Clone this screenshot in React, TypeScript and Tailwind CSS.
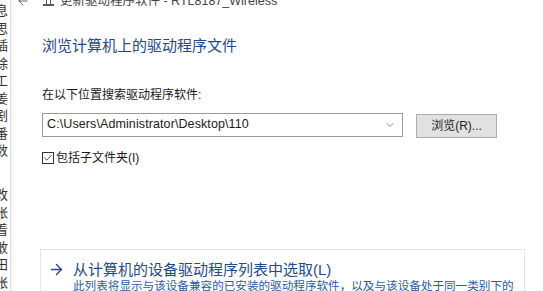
import { ChevronDown, ArrowLeft, ArrowRight, Check } from "lucide-react";

const stripChars = ["息", "思", "插", "除", "工", "姜", "剧", "番", "数", "", "", "改", "张", "着", "敢", "田", "张"];

const App = () => {
  return (
    <div
      className="flex h-[291px] w-[543px] overflow-hidden bg-white text-[#1a1a1a]"
      style={{ fontFamily: '"Liberation Sans", "Noto Sans CJK SC", sans-serif' }}
    >
      {/* background window peeking out on the left */}
      <div className="flex w-[11px] shrink-0 flex-col overflow-hidden border-r border-[#dcdcdc] pt-[2px] shadow-[2px_0_4px_rgba(0,0,0,0.06)]">
        {stripChars.map((c, i) => (
          <div key={i} className="-ml-[5px] h-[17.5px] text-[13px] leading-[17.5px] text-[#333]">
            {c}
          </div>
        ))}
      </div>

      <div className="flex flex-1 flex-col">
        {/* title bar, cut off at the top */}
        <div className="-mt-[8px] flex h-[20px] items-center text-[12.5px] text-[#444]">
          <ArrowLeft className="ml-[5px] h-[14px] w-[14px] text-[#555]" strokeWidth={1.5} />
          <div className="ml-[13px] flex h-[10px] w-[11px] items-end justify-center border-b-2 border-[#5a5a5a]">
            <div className="h-[7px] w-[5px] border border-b-0 border-[#5a5a5a]" />
          </div>
          <span className="ml-[6px]">更新驱动程序软件 - RTL8187_Wireless</span>
        </div>

        <div className="pl-[31px]">
          <div className="mt-[25px] text-[15px] leading-[20px] text-[#234a8c]">浏览计算机上的驱动程序文件</div>

          <div className="mt-[31px] text-[12px] leading-[16px]">在以下位置搜索驱动程序软件:</div>

          <div className="mt-[9px] flex items-center">
            <div className="flex h-[24px] w-[361px] items-center justify-between border border-[#9a9a9a] bg-white pl-[4px] pr-[6px]">
              <span className="text-[12.5px] tracking-[0.1px]">C:\Users\Administrator\Desktop\110</span>
              <ChevronDown className="h-[12px] w-[12px] text-[#666]" strokeWidth={1.5} />
            </div>
            <button className="ml-[13px] mt-[2px] h-[24px] w-[81px] border border-[#adadad] bg-[#e1e1e1] text-[12px] text-[#222]">
              浏览(R)...
            </button>
          </div>

          <label className="mt-[12px] flex items-center text-[12px] leading-[16px]">
            <span className="flex h-[12px] w-[12px] items-center justify-center border border-[#333] bg-white">
              <Check className="h-[10px] w-[10px] text-[#222]" strokeWidth={2} />
            </span>
            <span className="ml-[2px]">包括子文件夹(I)</span>
          </label>
        </div>

        <div className="ml-[29px] mr-[18px] mt-[83px] flex-1 border border-[#e6e6e6] pl-[7px] pt-[10px]">
          <div className="flex items-center text-[15px] leading-[19px] text-[#234a8c]">
            <ArrowRight className="h-[17px] w-[17px]" strokeWidth={2} />
            <span className="ml-[8px]">从计算机的设备驱动程序列表中选取(L)</span>
          </div>
          <div className="ml-[25px] whitespace-nowrap text-[11.6px] leading-[14px] text-[#2a5aa8]">
            此列表将显示与该设备兼容的已安装的驱动程序软件，以及与该设备处于同一类别下的
          </div>
        </div>
      </div>
    </div>
  );
};

export default App;
